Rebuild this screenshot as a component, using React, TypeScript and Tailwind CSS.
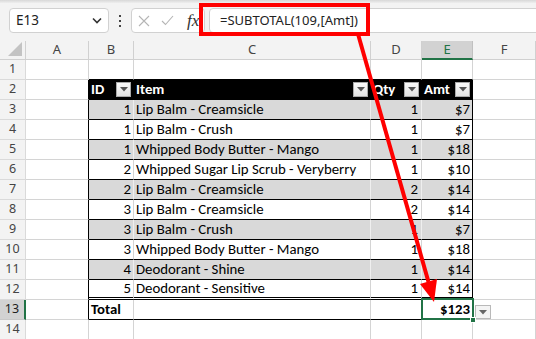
import React from "react";

const rows: [number, string, number, string][] = [
  [1, "Lip Balm - Creamsicle", 1, "$7"],
  [1, "Lip Balm - Crush", 1, "$7"],
  [1, "Whipped Body Butter - Mango", 1, "$18"],
  [2, "Whipped Sugar Lip Scrub - Veryberry", 1, "$10"],
  [2, "Lip Balm - Creamsicle", 2, "$14"],
  [3, "Lip Balm - Creamsicle", 2, "$14"],
  [3, "Lip Balm - Crush", 1, "$7"],
  [3, "Whipped Body Butter - Mango", 1, "$18"],
  [4, "Deodorant - Shine", 1, "$14"],
  [5, "Deodorant - Sensitive", 1, "$14"],
];

const cell = "h-full shrink-0 box-border border-r border-b flex items-center whitespace-nowrap";
const grid = "border-[#d4d4d4]";
const font = "font-['Carlito','Noto_Sans',sans-serif] text-[14.8px] text-black";

function FilterBtn() {
  return (
    <div className="ml-auto mr-[2px] flex h-[15px] w-[15px] shrink-0 items-center justify-center border border-[#a9a9a9] bg-gradient-to-b from-[#fafafa] to-[#e2e2e2]">
      <svg width="8" height="5" viewBox="0 0 8 5">
        <polygon points="0,0 8,0 4,4.5" fill="#555" />
      </svg>
    </div>
  );
}

function RowHead({ n, active }: { n: number; active?: boolean }) {
  return (
    <div
      className={`${cell} w-[26px] justify-center font-['Noto_Sans',sans-serif] text-[12.5px] ${
        active
          ? "bg-[#d2d2d2] border-b-[#c8c8c8] border-r-2 border-r-[#217346] text-[#1e1e1e]"
          : "bg-[#f3f3f3] border-[#dadada] text-[#444]"
      }`}
    >
      {n}
    </div>
  );
}

export default function App() {
  return (
    <div className="relative h-[339px] w-[536px] overflow-hidden bg-white">
      {/* formula bar */}
      <div className="h-[41px] bg-[#f3f3f3]">
        <div className="h-[3px] bg-gradient-to-b from-[#d8d8d8] to-[#eeeeee]" />
        <div className="flex items-center pl-[9px] pt-[5px]">
          <div className="flex h-[25px] w-[100px] items-center rounded-[4px] border border-[#d1d1d1] bg-white pl-[6px] pr-[6px] font-['Noto_Sans',sans-serif] text-[13.5px] text-[#222]">
            E13
            <svg className="ml-auto" width="10" height="7" viewBox="0 0 10 7">
              <path d="M1 1.5 L5 5.5 L9 1.5" stroke="#333" strokeWidth="1.6" fill="none" />
            </svg>
          </div>
          <div className="ml-[10px] flex flex-col gap-[3px]">
            <div className="h-[2px] w-[2px] bg-[#444]" />
            <div className="h-[2px] w-[2px] bg-[#444]" />
            <div className="h-[2px] w-[2px] bg-[#444]" />
          </div>
          <div className="ml-[10px] flex h-[25px] w-[74px] items-center rounded-[4px] border border-[#d1d1d1] bg-white pl-[6px]">
            <svg width="12" height="12" viewBox="0 0 12 12">
              <path d="M1 1 L11 11 M11 1 L1 11" stroke="#b5b5b5" strokeWidth="1.1" />
            </svg>
            <svg className="ml-[11px]" width="13" height="11" viewBox="0 0 13 11">
              <path d="M1 6 L4.5 9.5 L12 1" stroke="#b5b5b5" strokeWidth="1.1" fill="none" />
            </svg>
            <span className="ml-[13px] font-['Liberation_Serif',serif] text-[17px] italic text-[#333]">fx</span>
          </div>
          <div className="ml-[4px] mr-[-10px] flex h-[25px] flex-1 items-center rounded-[4px] border border-[#d1d1d1] bg-white pl-[10px] font-['Noto_Sans',sans-serif] text-[13px] text-[#222]">
            =SUBTOTAL(109,[Amt])
          </div>
        </div>
      </div>

      {/* column headers */}
      <div className="flex h-[19px] font-['Noto_Sans',sans-serif] text-[13px] text-[#444]">
        <div className={`${cell} w-[26px] justify-end items-end bg-[#f3f3f3] border-[#d0d0d0] pr-[3px] pb-[3px]`}>
          <svg width="14" height="14" viewBox="0 0 14 14">
            <polygon points="14,0 14,14 0,14" fill="#c3c3c3" />
          </svg>
        </div>
        {[
          ["A", "w-[63px]"],
          ["B", "w-[45px]"],
          ["C", "w-[237px]"],
          ["D", "w-[51px]"],
        ].map(([k, w]) => (
          <div key={k} className={`${cell} ${w} justify-center bg-[#f3f3f3] border-[#d0d0d0]`}>
            {k}
          </div>
        ))}
        <div className={`${cell} w-[51px] justify-center bg-[#d2d2d2] border-r-[#c0c0c0] border-b-2 border-b-[#217346] text-[#217346]`}>
          E
        </div>
        <div className={`${cell} w-[63px] justify-center bg-[#f3f3f3] border-[#d0d0d0]`}>F</div>
      </div>

      {/* row 1 */}
      <div className={`flex h-[20px] ${font}`}>
        <RowHead n={1} />
        <div className={`${cell} ${grid} w-[63px]`} />
        <div className={`${cell} ${grid} w-[45px] border-b-black`} />
        <div className={`${cell} ${grid} w-[237px] border-b-black`} />
        <div className={`${cell} ${grid} w-[51px] border-b-black`} />
        <div className={`${cell} ${grid} w-[51px] border-b-black`} />
        <div className={`${cell} ${grid} w-[63px]`} />
      </div>

      {/* row 2 header */}
      <div className={`flex h-[20px] ${font}`}>
        <RowHead n={2} />
        <div className={`${cell} ${grid} w-[63px] border-r-black`} />
        <div className={`${cell} w-[45px] border-black bg-black pl-[2px] font-bold text-white`}>
          ID
          <FilterBtn />
        </div>
        <div className={`${cell} w-[237px] border-black bg-black pl-[2px] font-bold text-white`}>
          Item
          <FilterBtn />
        </div>
        <div className={`${cell} w-[51px] border-black bg-black pl-[2px] font-bold text-white`}>
          Qty
          <FilterBtn />
        </div>
        <div className={`${cell} w-[51px] border-black bg-black pl-[2px] font-bold text-white`}>
          Amt
          <FilterBtn />
        </div>
        <div className={`${cell} ${grid} w-[63px]`} />
      </div>

      {rows.map(([id, item, qty, amt], i) => {
        const gray = i % 2 === 0;
        const fill = gray ? "bg-[#d9d9d9] border-r-[#efefef]" : "bg-white border-r-[#d4d4d4]";
        const bottom = i === rows.length - 1 ? "border-b-[3px] border-double border-b-black" : "border-b-black";
        return (
          <div key={i} className={`flex h-[20px] ${font}`}>
            <RowHead n={i + 3} />
            <div className={`${cell} ${grid} w-[63px] border-r-black`} />
            <div className={`${cell} w-[45px] ${fill} ${bottom} justify-end pr-[2px]`}>{id}</div>
            <div className={`${cell} w-[237px] ${fill} ${bottom} pl-[2px]`}>{item}</div>
            <div className={`${cell} w-[51px] ${fill} ${bottom} justify-end pr-[3px]`}>{qty}</div>
            <div className={`${cell} w-[51px] ${gray ? "bg-[#d9d9d9]" : "bg-white"} border-r-black ${bottom} justify-end pr-[2px]`}>
              {amt}
            </div>
            <div className={`${cell} ${grid} w-[63px]`} />
          </div>
        );
      })}

      {/* row 13 total */}
      <div className={`flex h-[20px] ${font}`}>
        <RowHead n={13} active />
        <div className={`${cell} ${grid} w-[63px] border-r-black`} />
        <div className={`${cell} w-[45px] border-r-[#d4d4d4] border-b-black pl-[2px] font-bold`}>Total</div>
        <div className={`${cell} w-[237px] border-r-[#d4d4d4] border-b-black`} />
        <div className={`${cell} w-[51px] border-r-[#d4d4d4] border-b-black`} />
        <div className={`${cell} relative w-[51px] border-r-black border-b-black justify-end pr-[2px] font-bold`}>
          $123
          <div className="absolute -left-[1px] -top-[2px] h-[22px] w-[53px] border-2 border-[#217346]" />
          <div className="absolute -bottom-[4px] -right-[4px] h-[6px] w-[6px] border border-white bg-[#217346]" />
        </div>
        <div className={`${cell} ${grid} w-[63px] items-start pt-[5px] pl-[2px]`}>
          <div className="flex h-[14px] w-[16px] items-center justify-center border border-[#b9b9b9] bg-[#f4f4f4]">
            <svg width="8" height="5" viewBox="0 0 8 5">
              <polygon points="0,0 8,0 4,4.5" fill="#666" />
            </svg>
          </div>
        </div>
      </div>

      {/* row 14 */}
      <div className={`flex h-[20px] ${font}`}>
        <RowHead n={14} />
        <div className={`${cell} ${grid} w-[63px]`} />
        <div className={`${cell} ${grid} w-[45px]`} />
        <div className={`${cell} ${grid} w-[237px]`} />
        <div className={`${cell} ${grid} w-[51px]`} />
        <div className={`${cell} ${grid} w-[51px]`} />
        <div className={`${cell} ${grid} w-[63px]`} />
      </div>

      {/* callout box */}
      <div className="absolute left-[199px] top-[3px] h-[33px] w-[171px] border-4 border-[#ff0000]" />

      {/* arrow */}
      <svg className="pointer-events-none absolute left-0 top-0" width="536" height="339" viewBox="0 0 536 339">
        <line x1="358" y1="34" x2="428.5" y2="282" stroke="#ff0000" strokeWidth="4" />
        <polygon points="434,302 437,279 420,284" fill="#ff0000" />
      </svg>
    </div>
  );
}
